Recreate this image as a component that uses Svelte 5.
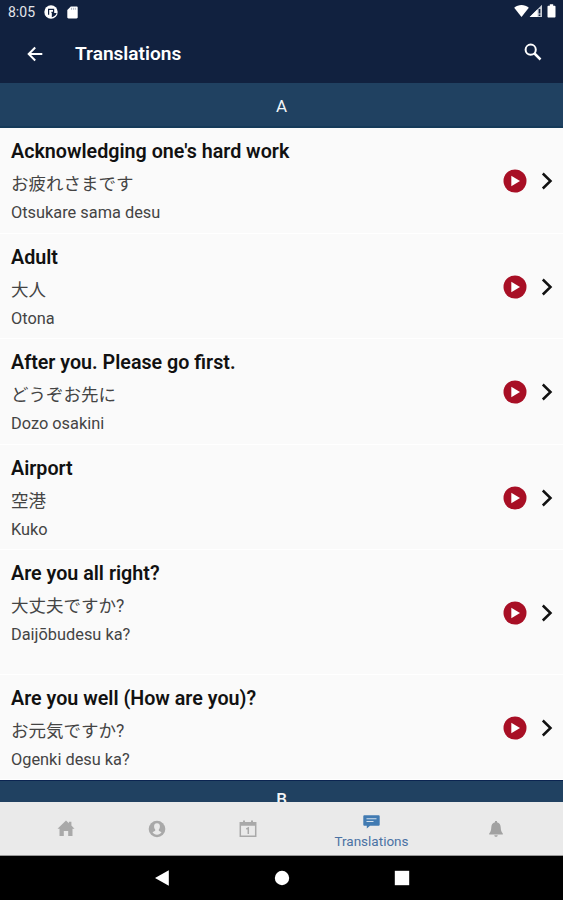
<script>
  const entries = [
    { title: "Acknowledging one's hard work", native: 'お疲れさまです', romaji: 'Otsukare sama desu' },
    { title: 'Adult', native: '大人', romaji: 'Otona' },
    { title: 'After you. Please go first.', native: 'どうぞお先に', romaji: 'Dozo osakini' },
    { title: 'Airport', native: '空港', romaji: 'Kuko' },
    { title: 'Are you all right?', native: '大丈夫ですか?', romaji: 'Daijōbudesu ka?', tall: true },
    { title: 'Are you well (How are you)?', native: 'お元気ですか?', romaji: 'Ogenki desu ka?' }
  ];
</script>

<div class="screen">
  <header>
    <div class="status">
      <span class="time">8:05</span>
      <svg class="pocket" width="14" height="14" viewBox="0 0 14 14">
        <circle cx="7" cy="7" r="6.700" fill="#fff" />
        <path d="M4.600 9.800V4.300h5v3H7.400" fill="none" stroke="#11213f" stroke-width="1.200" />
        <path d="M7.800 8h4.800c-.5 2-2 3.500-4.800 4.200z" fill="#11213f" />
      </svg>
      <svg class="sd" width="11" height="13" viewBox="0 0 11 13">
        <path d="M3.800.5h5.700c.7 0 1.200.5 1.200 1.200v9.600c0 .7-.5 1.200-1.200 1.200h-8c-.7 0-1.200-.5-1.200-1.200V4z" fill="#fff" />
        <path d="M4.500 1.800v2M6.400 1.800v2M8.300 1.800v2" stroke="#9aa2b3" stroke-width=".8" />
      </svg>
      <div class="signals">
        <svg width="15" height="14" viewBox="0 0 15 14"><path d="M.2 3.800C4.300.2 10.700.2 14.800 3.800L7.500 13z" fill="#fff" /></svg>
        <svg width="14" height="14" viewBox="0 0 14 14">
          <path d="M13 .8V13H.7z" fill="#c9ced6" />
          <path d="M8.500 5.200V13H.7z" fill="#fff" />
          <path d="M10.500 5v4.500M10.500 10.500v1.500" stroke="#11213f" stroke-width="1.700" />
        </svg>
        <svg class="battery" width="9" height="14" viewBox="0 0 9 14"><path d="M2.800.3h3.400v1.400h1.300c.6 0 1 .4 1 1v9.700c0 .6-.4 1-1 1h-6c-.6 0-1-.4-1-1V2.700c0-.6.4-1 1-1h1.300z" fill="#fff" /></svg>
      </div>
    </div>
    <div class="toolbar">
      <svg class="back" width="16" height="16" viewBox="0 0 16 16"><path d="M15.300 8H1.800M8.200 1.500L1.700 8l6.500 6.500" fill="none" stroke="#fff" stroke-width="2" /></svg>
      <h1>Translations</h1>
      <svg class="search" width="18" height="18" viewBox="0 0 18 18"><circle cx="6.700" cy="6.700" r="5.100" fill="none" stroke="#fff" stroke-width="2" /><path d="M10.500 10.500l6 6" stroke="#fff" stroke-width="2.500" /></svg>
    </div>
  </header>

  <main>
    <div class="section">A</div>
    {#each entries as e}
      <article class:tall={e.tall}>
        <div class="words">
          <h2>{e.title}</h2>
          <p class="native" lang="ja">{e.native}</p>
          <p class="romaji">{e.romaji}</p>
        </div>
        <svg class="play" width="24" height="24" viewBox="0 0 24 24"><circle cx="12" cy="12" r="11.500" fill="#a80f25" /><path d="M8.300 6.700v10.600L17 12z" fill="#fff" /></svg>
        <svg class="next" width="12" height="18" viewBox="0 0 12 18"><path d="M1.800 1.500L9.500 9l-7.700 7.500" fill="none" stroke="#111" stroke-width="2.500" /></svg>
      </article>
    {/each}
    <div class="section last">B</div>
  </main>

  <nav>
    <div class="tab home"><svg width="18" height="17" viewBox="0 0 18 17"><path d="M9 .6l2.900 2.700V1.800h2.500v3.800L17.500 8.800h-2v7.200h-4.300v-5H6.800v5H2.500V8.800h-2z" fill="#a9a9a9" /></svg></div>
    <div class="tab"><svg width="18" height="18" viewBox="0 0 18 18"><circle cx="9" cy="9" r="8.300" fill="#a9a9a9" /><path d="M9 3.300c-2.200 0-3.100 1.600-2.900 3.500.1 1.400.6 2.100 1.100 2.700v1.300l-2.700 1.500C5.500 13.900 7 14.800 9 14.800s3.500-.9 4.500-2.500l-2.700-1.500V9.500c.5-.6 1-1.300 1.100-2.700.2-1.900-.7-3.500-2.900-3.500z" fill="#eaeaea" /></svg></div>
    <div class="tab"><svg width="18" height="18" viewBox="0 0 18 18"><path d="M1.300 2.800h15.400v13.400H1.300z" fill="none" stroke="#a9a9a9" stroke-width="1.500" /><path d="M1 2.300h16v3.500H1zM4 .5h2v3H4zM12 .5h2v3h-2z" fill="#a9a9a9" /><path d="M7.300 9l2-1v6" fill="none" stroke="#a9a9a9" stroke-width="1.500" /></svg></div>
    <div class="tab active">
      <svg width="17" height="14" viewBox="0 0 17 14"><path d="M1.200.3h14.600c.5 0 .9.4.9.9v8.600c0 .5-.4.9-.9.9H7L3.800 13.500v-2.800H1.200c-.5 0-.9-.4-.9-.9V1.200c0-.5.4-.9.9-.9z" fill="#427bb2" /><path d="M3.500 3.700h10M3.500 6.500h7" stroke="#d4e1ed" stroke-width="1.100" /></svg>
      <span>Translations</span>
    </div>
    <div class="tab"><svg width="14" height="18" viewBox="0 0 14 18"><path d="M6 1h2v1.300c2.500.5 3.600 2.400 3.700 5 .1 3.200.7 4.700 2.100 6.200v1H.2v-1c1.400-1.500 2-3 2.100-6.200.1-2.600 1.200-4.500 3.700-5zM5.300 15.300h3.400c0 2-3.400 2-3.400 0z" fill="#a2a2a2" /></svg></div>
  </nav>

  <footer>
    <svg width="16" height="18" viewBox="0 0 16 18"><path d="M14.800 1.200v15.600L1 9z" fill="#fff" /></svg>
    <svg width="16" height="16" viewBox="0 0 16 16"><circle cx="8" cy="8" r="7.200" fill="#fff" /></svg>
    <svg width="16" height="16" viewBox="0 0 16 16"><path d="M.8.8h14.400v14.400H.8z" fill="#fff" /></svg>
  </footer>
</div>

<style>
  :global(body) { margin: 0; }
  .screen {
    width: 563px;
    height: 900px;
    display: flex;
    flex-direction: column;
    overflow: hidden;
    background: #fafafa;
    font-family: Roboto, "Noto Sans CJK JP", sans-serif;
  }
  h1, h2, p { margin: 0; font-weight: 400; white-space: nowrap; }
  svg { display: block; flex: none; }
  header { height: 83px; flex: none; background: #11213f; color: #fff; }
  .status { height: 24px; display: flex; align-items: center; padding: 0 7px 0 8px; }
  .time { width: 27px; font-size: 14px; color: #e3e6eb; white-space: nowrap; }
  .pocket { margin-left: 9px; }
  .sd { margin-left: 9px; }
  .signals { display: flex; margin: -2px 0 0 auto; }
  .battery { margin-left: 4px; }
  .toolbar { height: 59px; display: flex; align-items: center; padding: 0 21px 0 27px; }
  h1 { flex: 1; margin-left: 32px; font-size: 19.100px; font-weight: 600; line-height: 24px; }
  .search { margin-top: -3px; }
  main { flex: none; height: 719px; overflow: hidden; }
  .section {
    box-sizing: border-box;
    height: 45px;
    line-height: 47px;
    border-bottom: 2px solid #153a59;
    background: #204161;
    color: #f3f5f7;
    text-align: center;
    font-size: 17px;
  }
  .last { border: 0; border-top: 1px solid #0b2451; line-height: 37px; font-size: 17px; font-weight: 500; }
  article {
    box-sizing: border-box;
    height: 105.5px;
    display: flex;
    align-items: center;
    border-bottom: 1px solid #fff;
    padding: 2px 10px 0 11px;
  }
  .tall { height: 124.5px; }
  .words { align-self: flex-start; flex: 1; padding-top: 9px; }
  h2 { font-size: 19.700px; line-height: 26px; font-weight: 600; color: #111; }
  .native { font-size: 17.500px; line-height: 26px; margin-top: 6px; color: #444; font-weight: 400; }
  .romaji { font-size: 16.350px; line-height: 22px; margin-top: 5px; color: #444; }
  .play { margin-right: 14px; }
  nav {
    box-sizing: border-box;
    height: 54px;
    flex: none;
    display: flex;
    background: #eaeaea;
    border-bottom: 1px solid #999;
    padding: 0 20px;
  }
  .tab { width: 91px; display: flex; align-items: center; justify-content: center; }
  .active { width: 157px; flex-direction: column; padding-top: 6px; box-sizing: border-box; height: 53px; color: #4a72a4; }
  .active span { margin-top: 4px; font-size: 13.500px; line-height: 16px; }
  footer { height: 44px; flex: none; display: flex; align-items: center; justify-content: center; gap: 104px; background: #000; }
</style>
